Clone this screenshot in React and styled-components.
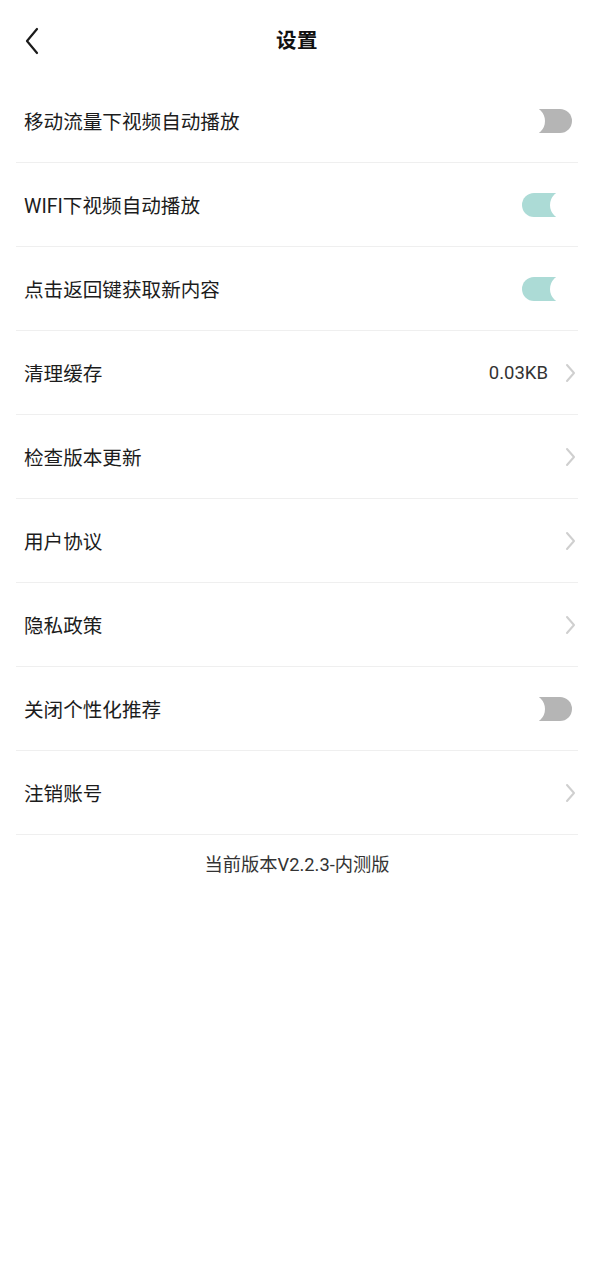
import React from "react";
import styled, { createGlobalStyle } from "styled-components";

const GlobalStyle = createGlobalStyle`
  body {
    margin: 0;
    background: #fff;
    font-family: Roboto, "Noto Sans CJK SC", sans-serif;
    color: #1f1f1f;
  }
`;

const items = [
  { label: "移动流量下视频自动播放", type: "switch", on: false },
  { label: "WIFI下视频自动播放", type: "switch", on: true },
  { label: "点击返回键获取新内容", type: "switch", on: true },
  { label: "清理缓存", type: "link", value: "0.03KB" },
  { label: "检查版本更新", type: "link" },
  { label: "用户协议", type: "link" },
  { label: "隐私政策", type: "link" },
  { label: "关闭个性化推荐", type: "switch", on: false },
  { label: "注销账号", type: "link" },
];

const BackIcon = () => (
  <svg width="16" height="28" viewBox="0 0 16 28" fill="none">
    <path d="M13 2 L3 14 L13 26" stroke="#1a1a1a" strokeWidth="2.2" strokeLinecap="round" strokeLinejoin="round" />
  </svg>
);

const ArrowIcon = () => (
  <svg width="12" height="20" viewBox="0 0 12 20" fill="none">
    <path d="M3 2 L10 10 L3 18" stroke="#cfcfcf" strokeWidth="2" strokeLinecap="round" strokeLinejoin="round" />
  </svg>
);

export default function App() {
  return (
    <Page>
      <GlobalStyle />
      <Header>
        <BackButton>
          <BackIcon />
        </BackButton>
        <Title>设置</Title>
      </Header>
      <List>
        {items.map((item) => (
          <Row key={item.label}>
            <Label>{item.label}</Label>
            {item.type === "switch" ? (
              <Switch $on={item.on}>
                <Thumb $on={item.on} />
              </Switch>
            ) : (
              <LinkSide>
                {item.value && <Value>{item.value}</Value>}
                <ArrowIcon />
              </LinkSide>
            )}
          </Row>
        ))}
      </List>
      <Version>当前版本V2.2.3-内测版</Version>
    </Page>
  );
}

const Page = styled.div`
  width: 100%;
  min-height: 1280px;
  background: #fff;
`;

const Header = styled.div`
  position: relative;
  height: 79px;
  display: flex;
  align-items: center;
  justify-content: center;
  padding-bottom: 2px;
  box-sizing: border-box;
`;

const BackButton = styled.div`
  position: absolute;
  left: 24px;
  top: 27px;
  display: flex;
`;

const Title = styled.div`
  font-size: 20.5px;
  font-weight: 700;
  color: #111;
  letter-spacing: 0.5px;
`;

const List = styled.div`
  margin: 0 16px;
`;

const Row = styled.div`
  height: 84px;
  box-sizing: border-box;
  border-bottom: 1px solid #efefef;
  padding: 0 6px 0 8px;
  display: flex;
  align-items: center;
  justify-content: space-between;
`;

const Label = styled.div`
  font-size: 19.6px;
  color: #1c1c1c;
`;

const LinkSide = styled.div`
  display: flex;
  align-items: center;
  gap: 16px;
  margin-right: -4px;
`;

const Value = styled.span`
  font-size: 18.5px;
  color: #333;
`;

const Switch = styled.div`
  position: relative;
  width: 50px;
  height: 24px;
  border-radius: 12px;
  background: ${(p) => (p.$on ? "#acdbd6" : "#b5b5b5")};
`;

const Thumb = styled.div`
  position: absolute;
  top: -3px;
  left: ${(p) => (p.$on ? "28px" : "-7px")};
  width: 30px;
  height: 30px;
  border-radius: 50%;
  background: #fff;
`;

const Version = styled.div`
  padding-top: 18px;
  line-height: 24px;
  text-align: center;
  font-size: 18.3px;
  color: #333;
`;
